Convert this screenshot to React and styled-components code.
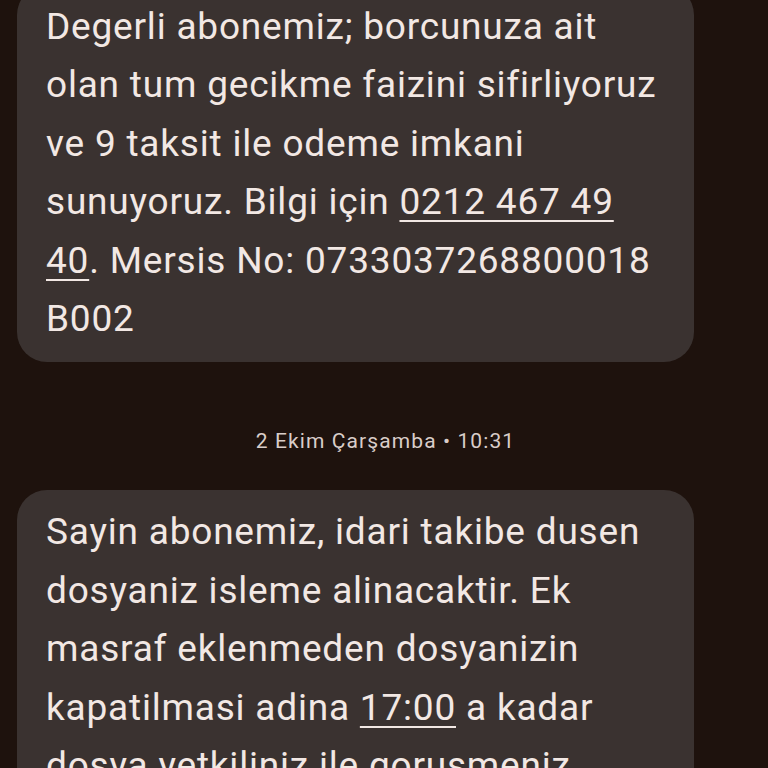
import React from 'react';
import styled, { createGlobalStyle } from 'styled-components';

const GlobalStyle = createGlobalStyle`
  html, body {
    margin: 0;
    padding: 0;
    background: #1e120d;
  }
  body {
    font-family: Roboto, 'Noto Sans', sans-serif;
    overflow: hidden;
  }
`;

const Thread = styled.div`
  width: 768px;
  height: 768px;
  overflow: hidden;
  background: #1e120d;
`;

const List = styled.div`
  display: flex;
  flex-direction: column;
  margin-top: -15px;
  padding: 0 74px 0 17px;
`;

const Bubble = styled.div`
  background: #3a3230;
  border-radius: 30px;
  padding: 13px 28px 14px 29px;
  color: #f2e8e4;
  font-size: 37px;
  line-height: 58.4px;
  letter-spacing: 0.8px;
  white-space: nowrap;
`;

const Link = styled.span`
  text-decoration: underline;
  text-decoration-thickness: 2px;
  text-underline-offset: 6px;
`;

const Stamp = styled.div`
  text-align: center;
  color: #d9cdc9;
  font-size: 21px;
  line-height: 24px;
  letter-spacing: 1.1px;
  margin: 67px 0 37px;
  padding-left: 60px;
`;

const messages = [
  {
    id: 1,
    body: (
      <>
        Degerli abonemiz; borcunuza ait
        <br />
        olan tum gecikme faizini sifirliyoruz
        <br />
        ve 9 taksit ile odeme imkani
        <br />
        sunuyoruz. Bilgi için <Link>0212 467 49</Link>
        <br />
        <Link>40</Link>. Mersis No: 0733037268800018
        <br />
        B002
      </>
    ),
  },
];

const App = () => (
  <Thread>
    <GlobalStyle />
    <List>
      {messages.map((m) => (
        <Bubble key={m.id}>{m.body}</Bubble>
      ))}
      <Stamp>2 Ekim Çarşamba • 10:31</Stamp>
      <Bubble>
        Sayin abonemiz, idari takibe dusen
        <br />
        dosyaniz isleme alinacaktir. Ek
        <br />
        masraf eklenmeden dosyanizin
        <br />
        kapatilmasi adina <Link>17:00</Link> a kadar
        <br />
        dosya yetkiliniz ile gorusmeniz
        <br />
        gerekmektedir.
      </Bubble>
    </List>
  </Thread>
);

export default App;
